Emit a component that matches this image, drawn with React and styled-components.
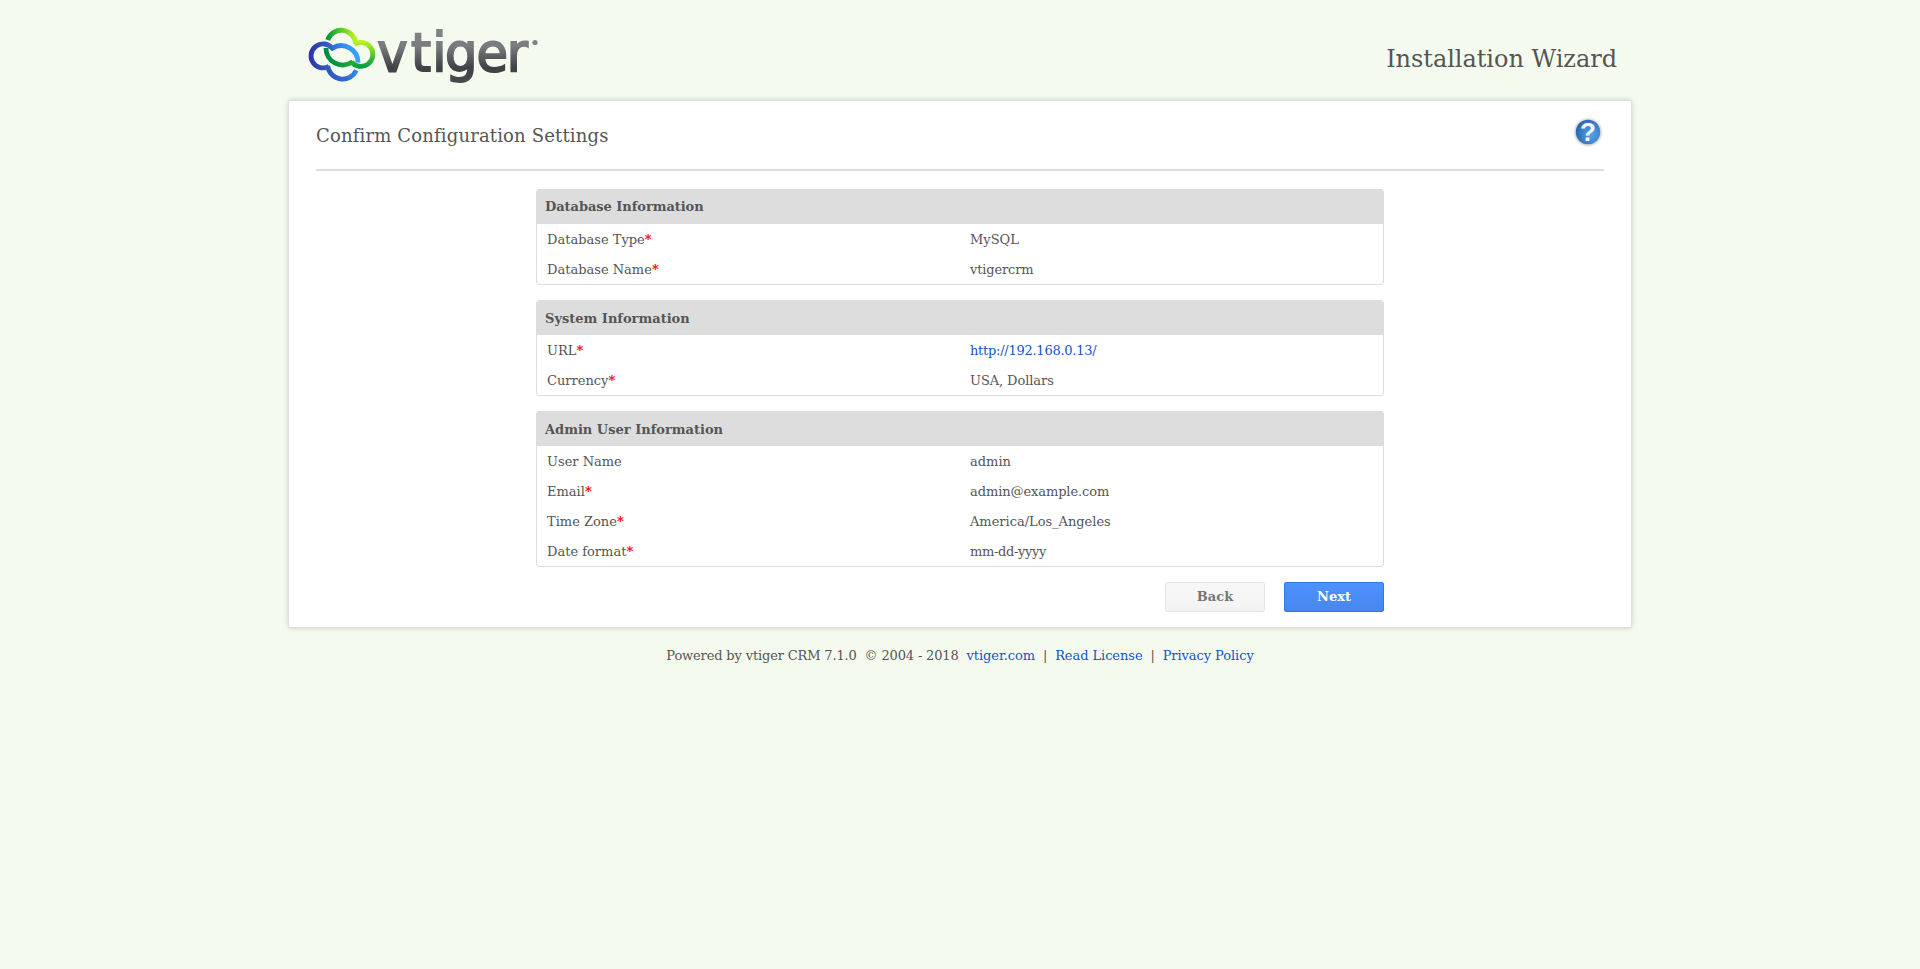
import React from "react";
import styled, { createGlobalStyle } from "styled-components";

const GlobalStyle = createGlobalStyle`
  * { box-sizing: border-box; }
  body {
    margin: 0;
    background: #f5faee;
    color: #555;
    font: 13px/20px "DejaVu Serif", serif;
  }
`;

const Page = styled.div`
  width: 1342px;
  margin: 0 auto;
`;

const Header = styled.header`
  display: flex;
  justify-content: space-between;
  height: 101px;
  padding: 18px 14px 0 11px;
`;

const LogoImage = styled.svg`
  display: block;
  width: 250px;
  height: 75px;
`;

const WizardTitle = styled.h1`
  margin: 0;
  padding-top: 21px;
  font-size: 24px;
  font-weight: 400;
  line-height: 40px;
  letter-spacing: -0.03px;
`;

const Card = styled.main`
  height: 526px;
  padding: 0 27px;
  background: #fff;
  border-radius: 2px;
  box-shadow: 0 0 5px 1px #ccc;
`;

const CardHeader = styled.div`
  display: flex;
  justify-content: space-between;
  height: 70px;
  border-bottom: 2px solid #ddd;
`;

const CardTitle = styled.h2`
  margin: 0;
  padding-top: 15px;
  font-size: 18px;
  font-weight: 400;
  line-height: 40px;
  letter-spacing: 0.16px;
`;

const HelpIcon = styled.svg`
  width: 32px;
  height: 32px;
  margin-top: 15px;
`;

const Content = styled.div`
  display: flex;
  flex-direction: column;
  gap: 15px;
  width: 848px;
  margin: 18px auto 0;
`;

const PanelTitle = styled.h3`
  height: 34px;
  margin: 0;
  padding: 0 8px;
  background: #ddd;
  font-size: 13px;
  font-weight: 700;
  line-height: 36px;
`;

const Panel = styled.section`
  border: 1px solid #ddd;
  border-radius: 3px;
  overflow: hidden;

  &:first-child ${PanelTitle} {
    line-height: 34px;
    letter-spacing: -0.05px;
  }
`;

const Row = styled.div`
  display: grid;
  grid-template-columns: 423px 1fr;
  height: 30px;
  line-height: 32px;
`;

const Cell = styled.div`
  padding-left: 10px;
  letter-spacing: ${(p) => p.$tracking || 0}px;
`;

const Required = styled.span`
  color: #f00;
  font-weight: 700;
`;

const Link = styled.a`
  color: #15c;
  text-decoration: none;
`;

const Actions = styled.div`
  display: flex;
  justify-content: flex-end;
  gap: 19px;
`;

const Button = styled.button`
  width: 100px;
  height: 30px;
  padding: 0;
  border: 1px solid ${(p) => (p.$primary ? "#3079ed" : "#e5e5e5")};
  border-radius: 2px;
  background: ${(p) =>
    p.$primary
      ? "linear-gradient(#4d90fe, #4787ed)"
      : "linear-gradient(#f7f7f7, #f3f3f3)"};
  color: ${(p) => (p.$primary ? "#fff" : "#777")};
  font: 700 13px/28px "DejaVu Serif", serif;
`;

const Footer = styled.footer`
  padding-top: 19px;
  text-align: center;
  white-space: pre;
  letter-spacing: -0.15px;

  ${Link} {
    letter-spacing: -0.07px;
  }
`;

const panels = [
  {
    title: "Database Information",
    rows: [
      { label: "Database Type", value: "MySQL", required: true },
      { label: "Database Name", value: "vtigercrm", required: true, tracking: -0.15 },
    ],
  },
  {
    title: "System Information",
    rows: [
      { label: "URL", value: "http://192.168.0.13/", required: true, link: true, tracking: -0.26 },
      { label: "Currency", value: "USA, Dollars", required: true, tracking: -0.08 },
    ],
  },
  {
    title: "Admin User Information",
    rows: [
      { label: "User Name", value: "admin" },
      { label: "Email", value: "admin@example.com", required: true, tracking: -0.09 },
      { label: "Time Zone", value: "America/Los_Angeles", required: true, tracking: -0.02 },
      { label: "Date format", value: "mm-dd-yyyy", required: true, tracking: -0.36 },
    ],
  },
];

function Logo() {
  return (
    <LogoImage viewBox="0 0 250 75" role="img" aria-label="vtiger">
      <defs>
        <linearGradient id="greenTop" gradientUnits="userSpaceOnUse" x1="80" y1="60" x2="165" y2="60">
          <stop offset="0" stopColor="#009640" />
          <stop offset="1" stopColor="#b8f51c" />
        </linearGradient>
        <linearGradient id="greenSide" gradientUnits="userSpaceOnUse" x1="180" y1="72" x2="185" y2="148">
          <stop offset="0" stopColor="#b8f51c" />
          <stop offset=".5" stopColor="#64c82c" />
          <stop offset="1" stopColor="#009e42" />
        </linearGradient>
        <linearGradient id="greenInner" gradientUnits="userSpaceOnUse" x1="75" y1="100" x2="160" y2="135">
          <stop offset="0" stopColor="#008c45" />
          <stop offset=".6" stopColor="#05963f" />
          <stop offset="1" stopColor="#2aaa35" />
        </linearGradient>
        <linearGradient id="blueInner" gradientUnits="userSpaceOnUse" x1="30" y1="110" x2="175" y2="110">
          <stop offset="0" stopColor="#2f34a8" />
          <stop offset=".4" stopColor="#3160c8" />
          <stop offset=".75" stopColor="#3097f5" />
          <stop offset="1" stopColor="#38a2ff" />
        </linearGradient>
        <linearGradient id="blueBottom" gradientUnits="userSpaceOnUse" x1="75" y1="185" x2="172" y2="155">
          <stop offset="0" stopColor="#3050bb" />
          <stop offset=".6" stopColor="#3169cf" />
          <stop offset="1" stopColor="#3090ef" />
        </linearGradient>
        <linearGradient id="metal" gradientUnits="userSpaceOnUse" x1="0" y1="-43" x2="0" y2="11">
          <stop offset="0" stopColor="#828487" />
          <stop offset=".35" stopColor="#797b7e" />
          <stop offset=".75" stopColor="#404144" />
          <stop offset="1" stopColor="#48494c" />
        </linearGradient>
      </defs>
      <g transform="scale(.333333)" fill="none" strokeWidth="14.5">
        <path stroke="url(#blueBottom)" d="M83 143A45.2 45.2 0 0 0 169 157" />
        <path stroke="url(#blueInner)" d="M174 134A50 50 0 0 0 97 91A36 36 0 1 0 87 145" />
        <path stroke="url(#greenTop)" d="M83 66A43.2 43.2 0 0 1 167 78" />
        <path stroke="url(#greenSide)" d="M163 79A36 36 0 1 1 154 131" />
        <path stroke="url(#greenInner)" d="M78 90A50 50 0 0 0 158 131" />
      </g>
      <text
        transform="translate(77.2 52.5) scale(.95 1)"
        x="0 35.6 57.9 71.3 104.5 136.5"
        y="0"
        fontFamily="DejaVu Sans, sans-serif"
        fontSize="54"
        fill="url(#metal)"
        stroke="url(#metal)"
        strokeWidth="2"
      >
        vtiger
      </text>
      <circle cx="235" cy="24.5" r="2.6" fill="#808285" />
    </LogoImage>
  );
}

function Help() {
  return (
    <HelpIcon viewBox="0 0 32 32" role="img" aria-label="Help">
      <defs>
        <radialGradient id="helpFill" cx=".65" cy=".6" r=".65">
          <stop offset="0" stopColor="#55a4ed" />
          <stop offset=".6" stopColor="#3d82c9" />
          <stop offset="1" stopColor="#2c67ad" />
        </radialGradient>
        <radialGradient id="helpHalo">
          <stop offset=".75" stopColor="#777" stopOpacity=".45" />
          <stop offset="1" stopColor="#aaa" stopOpacity="0" />
        </radialGradient>
      </defs>
      <circle cx="16" cy="16.3" r="15.5" fill="url(#helpHalo)" />
      <circle cx="16" cy="16" r="12.2" fill="url(#helpFill)" />
      <text x="16" y="25.3" textAnchor="middle" fontFamily="Liberation Sans, sans-serif" fontWeight="700" fontSize="26" fill="#f6f6f6">
        ?
      </text>
    </HelpIcon>
  );
}

export default function App() {
  return (
    <>
      <GlobalStyle />
      <Page>
        <Header>
          <Logo />
          <WizardTitle>Installation Wizard</WizardTitle>
        </Header>
        <Card>
          <CardHeader>
            <CardTitle>Confirm Configuration Settings</CardTitle>
            <Help />
          </CardHeader>
          <Content>
            {panels.map((panel) => (
              <Panel key={panel.title}>
                <PanelTitle>{panel.title}</PanelTitle>
                {panel.rows.map((row) => (
                  <Row key={row.label}>
                    <Cell>
                      {row.label}
                      {row.required && <Required>*</Required>}
                    </Cell>
                    <Cell $tracking={row.tracking}>
                      {row.link ? <Link href="#">{row.value}</Link> : row.value}
                    </Cell>
                  </Row>
                ))}
              </Panel>
            ))}
            <Actions>
              <Button>Back</Button>
              <Button $primary>Next</Button>
            </Actions>
          </Content>
        </Card>
        <Footer>
          {"Powered by vtiger CRM 7.1.0  © 2004 - 2018  "}
          <Link href="#">vtiger.com</Link>
          {"  |  "}
          <Link href="#">Read License</Link>
          {"  |  "}
          <Link href="#">Privacy Policy</Link>
        </Footer>
      </Page>
    </>
  );
}
